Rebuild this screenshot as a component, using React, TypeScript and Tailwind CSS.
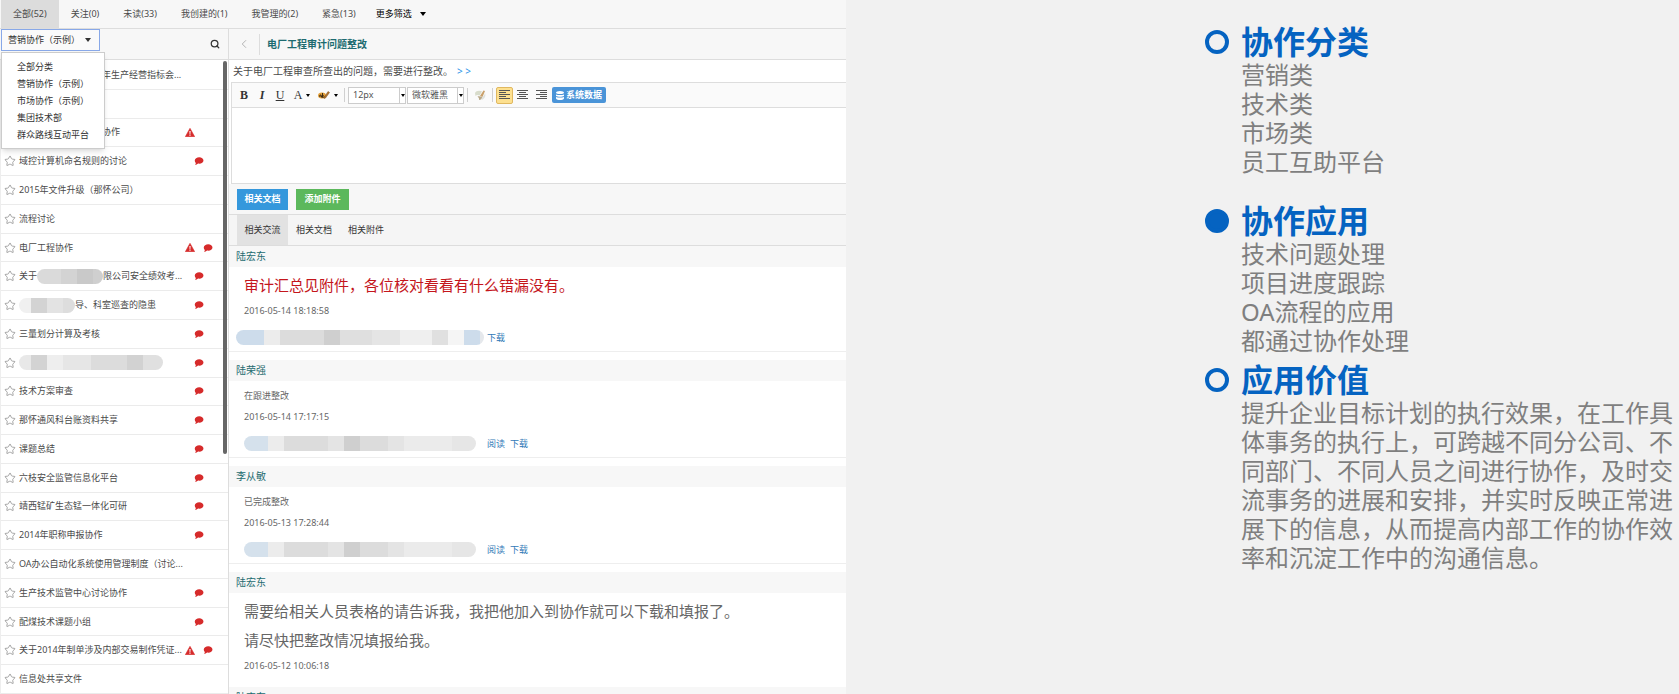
import React, { useState } from "react";
import { ChevronLeft, Search, Star } from "lucide-react";
import clsx from "clsx";

type Topic = {
  before?: string;
  mosaic?: string[];
  title: string;
  indent?: boolean;
  warn?: boolean;
  chat?: boolean;
};

type Reply = {
  author: string;
  lines: string[];
  time: string;
  large?: boolean;
  red?: boolean;
  mosaic?: string[];
  wide?: boolean;
  links?: string[];
};

const filters = ["全部(52)", "关注(0)", "未读(33)", "我创建的(1)", "我管理的(2)", "紧急(13)"];

const categories = ["全部分类", "营销协作（示例）", "市场协作（示例）", "集团技术部", "群众路线互动平台"];

const topics: Topic[] = [
  { title: "年生产经营指标会...", indent: true },
  { title: "" },
  { title: "协作", indent: true, warn: true },
  { title: "域控计算机命名规则的讨论", chat: true },
  { title: "2015年文件升级（那怀公司）" },
  { title: "流程讨论" },
  { title: "电厂工程协作", warn: true, chat: true },
  {
    before: "关于",
    mosaic: ["w-6 bg-[#dadada]", "w-4 bg-[#d3d3d3]", "w-4 bg-[#c9c9c9]", "w-2.5 bg-[#cfcfcf]"],
    title: "限公司安全绩效考...",
    chat: true,
  },
  {
    mosaic: ["w-3 bg-[#f0f0f0]", "w-4 bg-[#d3d3d3]", "w-4 bg-[#e3e3e3]", "w-3 bg-[#dddddd]"],
    title: "导、科室巡查的隐患",
    chat: true,
  },
  { title: "三量划分计算及考核", chat: true },
  {
    mosaic: [
      "w-3 bg-[#e8e8e8]",
      "w-4 bg-[#d3d3d3]",
      "w-4 bg-[#eeeeee]",
      "w-7 bg-[#e6e6e6]",
      "w-9 bg-[#dcdcdc]",
      "w-4 bg-[#d2d2d2]",
      "w-5 bg-[#e0e0e0]",
    ],
    title: "",
    chat: true,
  },
  { title: "技术方案审查", chat: true },
  { title: "那怀通风科台账资料共享", chat: true },
  { title: "课题总结", chat: true },
  { title: "六枝安全监管信息化平台", chat: true },
  { title: "靖西锰矿生态锰一体化可研", chat: true },
  { title: "2014年职称申报协作", chat: true },
  { title: "OA办公自动化系统使用管理制度（讨论..." },
  { title: "生产技术监管中心讨论协作", chat: true },
  { title: "配煤技术课题小组", chat: true },
  { title: "关于2014年制单涉及内部交易制作凭证...", warn: true, chat: true },
  { title: "信息处共享文件" },
];

const fileMosaic = [
  "w-6 bg-[#d5e1ec]",
  "w-4 bg-[#ececec]",
  "w-11 bg-[#dcdcdc]",
  "w-4 bg-[#e4e4e4]",
  "w-4 bg-[#cfcfcf]",
  "w-7 bg-[#dcdcdc]",
  "w-4 bg-[#e4e4e4]",
  "w-12 bg-[#ebebeb]",
  "w-6 bg-[#e6e6e6]",
];

const replies: Reply[] = [
  {
    author: "陆宏东",
    lines: ["审计汇总见附件，各位核对看看有什么错漏没有。"],
    time: "2016-05-14 18:18:58",
    large: true,
    red: true,
    wide: true,
    mosaic: [
      "w-7 bg-[#cddceb]",
      "w-4 bg-[#ececec]",
      "w-11 bg-[#dcdcdc]",
      "w-4 bg-[#cfcfcf]",
      "w-8 bg-[#dfdfdf]",
      "w-7 bg-[#e5e5e5]",
      "w-8 bg-[#efefef]",
      "w-4 bg-[#e0e0e0]",
      "w-4 bg-[#f5f5f5]",
      "w-4 bg-[#cddceb]",
      "w-1 bg-[#e5e8ec]",
    ],
    links: ["下载"],
  },
  {
    author: "陆荣强",
    lines: ["在跟进整改"],
    time: "2016-05-14 17:17:15",
    mosaic: fileMosaic,
    links: ["阅读", "下载"],
  },
  {
    author: "李从敏",
    lines: ["已完成整改"],
    time: "2016-05-13 17:28:44",
    mosaic: fileMosaic,
    links: ["阅读", "下载"],
  },
  {
    author: "陆宏东",
    lines: ["需要给相关人员表格的请告诉我，我把他加入到协作就可以下载和填报了。", "请尽快把整改情况填报给我。"],
    time: "2016-05-12 10:06:18",
    large: true,
  },
  { author: "陆宏东", lines: [], time: "" },
];

const Caret = ({ className }: { className?: string }) => (
  <svg viewBox="0 0 6 4" className={clsx("h-1 w-1.5 shrink-0", className)} fill="currentColor" aria-hidden="true">
    <path d="M0 0h6L3 4z" />
  </svg>
);

const SmallCaret = () => (
  <svg viewBox="0 0 4 3" className="h-[3px] w-1 shrink-0" fill="#000" aria-hidden="true">
    <path d="M0 0h4L2 3z" />
  </svg>
);

const WarnIcon = () => (
  <svg viewBox="0 0 20 18" className="h-[9px] w-2.5 shrink-0" role="img" aria-label="紧急">
    <path d="M10 0.5 19.5 17.5H0.5Z" fill="#d62b2b" stroke="#d62b2b" strokeLinejoin="round" />
    <path d="M8.8 6h2.4l-.4 6H9.2zM8.8 13.2h2.4v2.2H8.8z" fill="#fff" />
  </svg>
);

const ChatIcon = () => (
  <svg viewBox="0 0 20 17" className="h-2 w-2.5 shrink-0" role="img" aria-label="未读消息">
    <path
      d="M10.5 0.5c5 0 9 3 9 6.8s-4 6.8-9 6.8c-.9 0-1.7-.1-2.5-.3C6.3 15.6 4 16.5 1.500 16.5c1-1 1.7-2.3 1.8-3.800C1.7 11.4 1 9.5 1 7.300 1 3.5 5.5.5 10.5.5Z"
      fill="#d62b2b"
    />
  </svg>
);

const DataIcon = () => (
  <svg viewBox="0 0 16 18" className="h-[9px] w-2 shrink-0" fill="#fff" aria-hidden="true">
    <path d="M0 3.500C0 1.500 3.500 0 8 0s8 1.500 8 3.500S12.500 6 8 6 0 5.500 0 3.500Z" />
    <path d="M0 7c4 1.500 12 1.500 16 0v3c-3 2-13 2-16 0zM0 12c4 1.500 12 1.500 16 0v3c-2 4-14 4-16 0z" />
  </svg>
);

const MarkerIcon = () => (
  <svg viewBox="0 0 24 20" className="h-2.5 w-3" aria-hidden="true">
    <ellipse cx="8" cy="11" rx="8" ry="6" fill="#e3a13a" />
    <path d="M3 13c0-4 4-4 4 0M3 12h4v3M9 6v9c4 1 4-5 0-4" fill="none" stroke="#3c2a14" strokeWidth="2" />
    <path d="m13 14 7-11 3 2-8 11-3 1z" fill="#b4742d" stroke="#7b4a18" />
  </svg>
);

const BrushIcon = () => (
  <svg viewBox="0 0 24 24" className="h-3 w-3" aria-hidden="true">
    <path d="M2 8c2-5 10-6 14-3l-5 8c-3-2-6-1-8 1z" fill="#d8dccb" />
    <path d="m12 14 7-11 3 1-5 12z" fill="#c9a06a" />
    <path d="M7 15c3-1 6 0 9 1 1 3-2 6-6 6 1-3-1-5-3-7z" fill="#b9a888" />
    <path d="M16 16c3-1 5-4 6-8 2 6 0 11-7 14z" fill="#dfe2dd" />
  </svg>
);

const AlignIcon = ({ align }: { align: "left" | "center" | "right" }) => {
  const short = align === "left" ? 0 : align === "center" ? 2 : 4;
  return (
    <svg viewBox="0 0 11 10" className="h-2.5 w-[11px]" fill="#555" shapeRendering="crispEdges" aria-hidden="true">
      {[0, 2, 4, 6, 8].map((y, i) => (
        <rect key={y} x={i % 2 ? short : 0} y={y} width={i % 2 ? 7 : 11} height="1" />
      ))}
    </svg>
  );
};

const Mosaic = ({ cells }: { cells: string[] }) => (
  <span className="flex h-[15px] shrink-0 overflow-hidden rounded-full" aria-hidden="true">
    {cells.map((cell, i) => (
      <span key={i} className={clsx("h-full", cell)} />
    ))}
  </span>
);

const Separator = () => <span className="mx-[3px] h-3.5 w-px bg-[#d0d0d0]" />;

function CategoryPicker() {
  const [open, setOpen] = useState(true);
  return (
    <div className="relative ml-px self-start">
      <button
        type="button"
        aria-expanded={open}
        onClick={() => setOpen(!open)}
        className="flex h-[22px] w-[99px] items-center justify-between border border-[#88a8e8] bg-[#fafafa] pr-2 pl-1.5 text-[#333]"
      >
        营销协作（示例）
        <Caret />
      </button>
      {open && (
        <ul className="absolute top-[23px] left-0 z-10 w-[104px] border border-[#ccc] bg-white py-[5px] shadow-md">
          {categories.map((name) => (
            <li key={name}>
              <button type="button" className="h-[17px] w-full pl-[15px] text-left whitespace-nowrap text-[#333]">
                {name}
              </button>
            </li>
          ))}
        </ul>
      )}
    </div>
  );
}

function TopicRow({ topic }: { topic: Topic }) {
  return (
    <li className="flex min-h-0 items-center border-b border-[#ebebeb] pl-[3px]">
      <Star className="size-3 shrink-0 text-[#888]" strokeWidth={1.5} />
      <a
        href="#topic"
        className={clsx(
          "flex w-[169px] shrink-0 items-center whitespace-nowrap",
          topic.indent ? "pl-[86px]" : "pl-[3px]"
        )}
      >
        {topic.before}
        {topic.mosaic && <Mosaic cells={topic.mosaic} />}
        {topic.title}
      </a>
      <span
        className={clsx("flex w-7 shrink-0 items-center", topic.warn ? "justify-between" : "justify-center")}
      >
        {topic.warn && <WarnIcon />}
        {topic.chat && <ChatIcon />}
      </span>
    </li>
  );
}

function TopicList() {
  return (
    <section className="flex w-[229px] shrink-0 flex-col border-r border-[#ddd]">
      <div className="flex h-[31px] shrink-0 items-center justify-between border-b border-[#ddd] bg-[#f7f7f7]">
        <CategoryPicker />
        <button type="button" aria-label="搜索" className="mr-2">
          <Search className="size-2.5 text-[#333]" strokeWidth={3} />
        </button>
      </div>
      <div className="relative flex min-h-0 flex-1">
        <ul className="grid min-w-0 flex-1 auto-rows-fr border-l border-[#eee] pt-px">
          {topics.map((topic, i) => (
            <TopicRow key={i} topic={topic} />
          ))}
        </ul>
        <span className="absolute top-px right-px h-[62%] w-1 rounded-full bg-[#666]" />
      </div>
    </section>
  );
}

function Editor() {
  return (
    <div className="ml-0.5 border-y border-l border-[#ddd] bg-white">
      <div className="flex h-[25px] items-center border-b border-[#ddd] bg-[#fafafa] pl-[3px] text-[#333]">
        <button type="button" aria-label="加粗" className="w-[18px] font-['Liberation_Serif',serif] text-xs font-bold">
          B
        </button>
        <button
          type="button"
          aria-label="斜体"
          className="w-[18px] font-['Liberation_Serif',serif] text-xs font-bold italic"
        >
          I
        </button>
        <button type="button" aria-label="下划线" className="w-[18px] font-['Liberation_Serif',serif] text-xs underline">
          U
        </button>
        <button
          type="button"
          aria-label="文字颜色"
          className="flex w-[26px] items-center justify-center gap-1 font-['Liberation_Serif',serif] text-xs"
        >
          A
          <SmallCaret />
        </button>
        <button type="button" aria-label="背景颜色" className="flex w-[26px] items-center justify-center gap-1">
          <MarkerIcon />
          <SmallCaret />
        </button>
        <Separator />
        <span className="relative flex">
          <select
            aria-label="字号"
            className="h-[17px] w-[58px] appearance-none border border-[#ccc] bg-white pl-1 text-[#555]"
          >
            <option>12px</option>
          </select>
          <span className="pointer-events-none absolute inset-y-px right-px flex items-center border-l border-[#ccc] pl-px">
            <SmallCaret />
          </span>
        </span>
        <span className="relative ml-px flex">
          <select
            aria-label="字体"
            className="h-[17px] w-[57px] appearance-none border border-[#ccc] bg-white pl-1 text-[#555]"
          >
            <option>微软雅黑</option>
          </select>
          <span className="pointer-events-none absolute inset-y-px right-px flex items-center border-l border-[#ccc] pl-px">
            <SmallCaret />
          </span>
        </span>
        <Separator />
        <button type="button" aria-label="格式刷" className="flex w-[18px] justify-center">
          <BrushIcon />
        </button>
        <Separator />
        <button
          type="button"
          aria-label="左对齐"
          className="flex size-[17px] items-center justify-center rounded-xs border border-[#e0b860] bg-[#fde08f]"
        >
          <AlignIcon align="left" />
        </button>
        <button type="button" aria-label="居中对齐" className="flex w-[19px] justify-center">
          <AlignIcon align="center" />
        </button>
        <button type="button" aria-label="右对齐" className="flex w-[18px] justify-center">
          <AlignIcon align="right" />
        </button>
        <button
          type="button"
          className="ml-0.5 flex h-4 items-center gap-0.5 rounded-xs bg-[#4a94d8] px-1 font-bold whitespace-nowrap text-white"
        >
          <DataIcon />
          系统数据
        </button>
      </div>
      <textarea aria-label="回复内容" className="block h-[75px] w-full resize-none bg-white outline-none" />
    </div>
  );
}

function ReplyItem({ reply }: { reply: Reply }) {
  return (
    <article>
      <h3 className="h-[21px] bg-[#f7f7f7] pl-[7px] text-[10px] leading-[21px] text-[#1d6b70]">{reply.author}</h3>
      <div className="pt-1 pl-[15px] text-[#666]">
        {reply.lines.map((line) => (
          <p
            key={line}
            className={clsx(
              reply.large ? "text-[15px] leading-[29px]" : "leading-[21px]",
              reply.red && "text-[#c4161c]"
            )}
          >
            {line}
          </p>
        ))}
        <time className="block leading-[21px]">{reply.time}</time>
      </div>
      {reply.mosaic ? (
        <div
          className={clsx(
            "mb-2 flex h-[31px] items-center border-b border-[#eee] pt-[3px]",
            reply.wide ? "pl-[7px]" : "pl-[15px]"
          )}
        >
          <span className={clsx("flex", reply.wide ? "w-[251px]" : "w-[243px]")}>
            <Mosaic cells={reply.mosaic} />
          </span>
          <span className="flex gap-[5px]">
            {reply.links?.map((link) => (
              <a key={link} href="#file" className="text-[#337ab7]">
                {link}
              </a>
            ))}
          </span>
        </div>
      ) : (
        <div className="h-[11px]" />
      )}
    </article>
  );
}

function TopicDetail() {
  return (
    <section className="flex min-w-0 flex-1 flex-col">
      <header className="flex h-[31px] shrink-0 items-center border-b border-[#ddd] bg-[#f7f7f7]">
        <button type="button" aria-label="返回" className="flex w-[30px] justify-center text-[#aaa]">
          <ChevronLeft className="size-3.5" strokeWidth={1.5} />
        </button>
        <h2 className="border-l border-[#ddd] pl-[7px] text-[10px] leading-[21px] font-bold text-[#1d6b70]">
          电厂工程审计问题整改
        </h2>
      </header>
      <p className="flex h-[22px] shrink-0 gap-1 pl-1 text-[10px] leading-[22px]">
        关于电厂工程审查所查出的问题，需要进行整改。
        <a href="#more" className="text-[#2e95e8]">
          &gt;&nbsp;&gt;
        </a>
      </p>
      <Editor />
      <div className="flex h-[31px] shrink-0 items-center gap-2 border-b border-[#ddd] bg-[#f7f7f7] pl-2 font-bold text-white">
        <button type="button" className="h-[21px] w-[51px] bg-[#3598dc]">
          相关文档
        </button>
        <button type="button" className="h-[21px] w-[53px] bg-[#5cb85c]">
          添加附件
        </button>
      </div>
      <nav className="flex h-[31px] shrink-0 border-b border-[#ddd] bg-[#f5f5f5] pl-2 text-[#333]">
        <button type="button" className="w-[51px] bg-[#e2e2e2]">
          相关交流
        </button>
        <button type="button" className="w-[52px]">
          相关文档
        </button>
        <button type="button" className="w-[52px]">
          相关附件
        </button>
      </nav>
      <div className="min-h-0 flex-1 overflow-hidden">
        {replies.map((reply, i) => (
          <ReplyItem key={i} reply={reply} />
        ))}
      </div>
    </section>
  );
}

function Point({ title, filled, children }: { title: string; filled?: boolean; children: React.ReactNode }) {
  return (
    <section>
      <h2 className="flex h-[37px] items-center gap-3 text-[32px] leading-[37px] font-bold text-[#0563c1]">
        <span className={clsx("size-6 shrink-0 rounded-full border-4 border-[#0563c1]", filled && "bg-[#0563c1]")} />
        {title}
      </h2>
      <div className="pl-9 text-2xl leading-[29px] text-[#7f7f7f]">{children}</div>
    </section>
  );
}

export default function App() {
  return (
    <div
      lang="zh-CN"
      className="grid h-screen grid-cols-[846fr_833fr] overflow-hidden bg-[#f1f1f1] font-['Noto_Sans','Noto_Sans_CJK_SC',sans-serif]"
    >
      <main className="flex min-h-0 min-w-0 flex-col bg-white text-[9px] leading-3 text-[#4a4a4a]">
        <nav className="flex h-[29px] shrink-0 border-b border-[#ddd] bg-[#f7f7f7] pl-px whitespace-nowrap">
          {filters.map((name, i) => (
            <button key={name} type="button" className={clsx("px-3", i === 0 && "bg-[#dcdcdc]")}>
              {name}
            </button>
          ))}
          <button type="button" className="flex items-center gap-2 pl-2 text-black">
            更多筛选
            <Caret />
          </button>
        </nav>
        <div className="flex min-h-0 flex-1">
          <TopicList />
          <TopicDetail />
        </div>
      </main>

      <aside className="ml-auto w-[474px] pt-[23px]">
        <Point title="协作分类">
          <p>营销类</p>
          <p>技术类</p>
          <p>市场类</p>
          <p>员工互助平台</p>
        </Point>
        <div className="mt-[26px]">
          <Point title="协作应用" filled>
            <p>技术问题处理</p>
            <p>项目进度跟踪</p>
            <p>OA流程的应用</p>
            <p>都通过协作处理</p>
          </Point>
        </div>
        <div className="mt-1.5">
          <Point title="应用价值">
            <p>
              提升企业目标计划的执行效果，在工作具体事务的执行上，可跨越不同分公司、不同部门、不同人员之间进行协作，及时交流事务的进展和安排，并实时反映正常进展下的信息，从而提高内部工作的协作效率和沉淀工作中的沟通信息。
            </p>
          </Point>
        </div>
      </aside>
    </div>
  );
}
